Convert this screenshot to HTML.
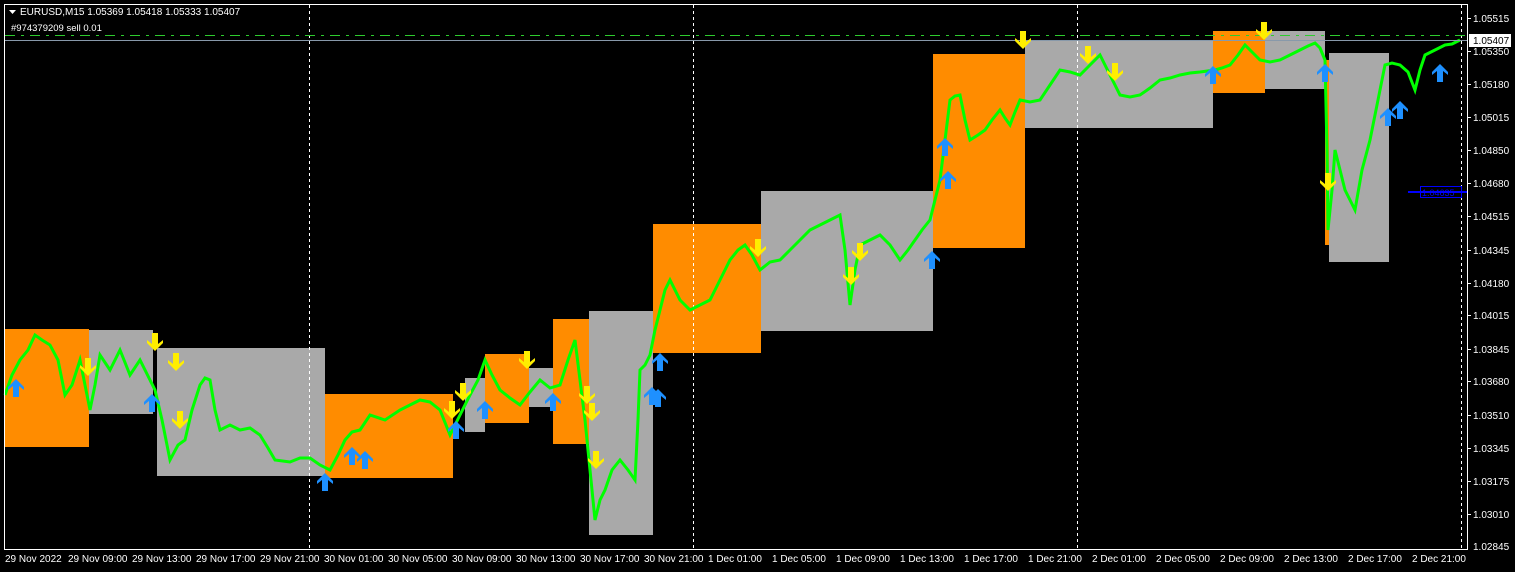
<!DOCTYPE html>
<html><head><meta charset="utf-8"><style>
body{margin:0;background:#000;width:1515px;height:572px;overflow:hidden;font-family:"Liberation Sans",sans-serif}
svg{display:block}
text{font-family:"Liberation Sans",sans-serif;font-size:10px;fill:#fff}
</style></head><body>
<svg width="1515" height="572" viewBox="0 0 1515 572">
<defs>
<g id="up"><path d="M0,-9 L8,-1 L8,2 L3,-2 L3,9 L-3,9 L-3,-2 L-8,2 L-8,-1 Z" fill="#1e90ff"/></g>
<g id="dn"><path d="M0,9 L8,1 L8,-2 L3,2 L3,-9 L-3,-9 L-3,2 L-8,-2 L-8,1 Z" fill="#ffee00"/></g>
</defs>
<rect x="0" y="0" width="1515" height="572" fill="#000"/>
<g>
<rect x="5" y="329" width="84" height="118" fill="#ff8c00"/>
<rect x="89" y="330" width="64" height="84" fill="#a9a9a9"/>
<rect x="157" y="348" width="168" height="128" fill="#a9a9a9"/>
<rect x="325" y="394" width="128" height="84" fill="#ff8c00"/>
<rect x="465" y="378" width="20" height="54" fill="#a9a9a9"/>
<rect x="485" y="354" width="44" height="69" fill="#ff8c00"/>
<rect x="529" y="368" width="24" height="39" fill="#a9a9a9"/>
<rect x="553" y="319" width="36" height="125" fill="#ff8c00"/>
<rect x="589" y="311" width="64" height="224" fill="#a9a9a9"/>
<rect x="653" y="224" width="108" height="129" fill="#ff8c00"/>
<rect x="761" y="191" width="172" height="140" fill="#a9a9a9"/>
<rect x="933" y="54" width="92" height="194" fill="#ff8c00"/>
<rect x="1025" y="41" width="188" height="87" fill="#a9a9a9"/>
<rect x="1213" y="31" width="52" height="62" fill="#ff8c00"/>
<rect x="1265" y="31" width="60" height="58" fill="#a9a9a9"/>
<rect x="1325" y="60" width="4" height="185" fill="#ff8c00"/>
<rect x="1329" y="53" width="60" height="209" fill="#a9a9a9"/>
</g>
<g stroke="#fff" stroke-dasharray="3,3" stroke-width="1">
<line x1="309.5" y1="5" x2="309.5" y2="548"/>
<line x1="693.5" y1="5" x2="693.5" y2="548"/>
<line x1="1077.5" y1="5" x2="1077.5" y2="548"/>
<line x1="1461.5" y1="5" x2="1461.5" y2="548"/>
</g>
<polyline fill="none" stroke="#00ff00" stroke-width="3" points="5,395 12,375 20,360 28,350 35,335 42,340 50,345 58,360 65,395 72,385 80,360 90,410 95,385 100,355 110,370 120,350 130,375 140,360 150,380 155,390 162,420 170,460 178,445 185,440 192,410 200,385 205,378 210,380 215,410 220,430 230,425 240,430 250,428 260,435 268,448 275,460 290,462 300,458 310,458 320,465 330,470 338,455 345,440 352,432 360,430 370,415 385,420 400,410 410,405 420,400 430,402 440,410 450,435 460,415 470,395 478,380 485,360 492,375 500,390 510,398 520,405 530,392 540,380 550,388 560,385 568,360 575,340 580,380 585,420 590,470 595,520 600,500 605,490 612,470 620,460 628,470 635,480 638,420 640,370 645,365 650,355 655,330 660,310 665,290 670,280 680,300 690,310 700,305 710,300 720,280 730,260 738,250 745,245 752,255 760,270 770,262 780,260 790,250 800,240 810,230 820,225 830,220 840,215 845,250 850,305 855,270 860,245 870,240 880,235 890,245 900,260 908,250 915,240 922,230 930,220 935,200 940,180 945,140 950,100 955,96 960,95 965,120 970,140 978,135 985,130 992,120 1000,110 1005,118 1010,125 1015,112 1020,100 1030,102 1040,100 1050,85 1060,70 1070,72 1080,75 1090,65 1100,55 1110,75 1120,95 1130,97 1140,95 1150,88 1160,80 1170,78 1180,75 1190,73 1200,72 1215,70 1222,68 1230,65 1238,55 1245,45 1252,52 1260,60 1270,62 1280,60 1290,55 1300,50 1308,46 1315,43 1320,48 1325,60 1327,150 1328,230 1332,190 1335,150 1340,170 1345,190 1350,200 1355,210 1362,170 1370,140 1378,100 1385,65 1392,63 1400,65 1408,72 1415,90 1420,70 1425,55 1435,50 1445,45 1452,44 1460,40"/>
<line x1="5" y1="35.5" x2="1467" y2="35.5" stroke="#2ecc2e" stroke-width="1" stroke-dasharray="10,6,3,6"/>
<line x1="5" y1="40.5" x2="1467" y2="40.5" stroke="#8899aa" stroke-width="1"/>
<line x1="1408" y1="192" x2="1467" y2="192" stroke="#0000ff" stroke-width="2"/>
<rect x="1420.5" y="186.5" width="41" height="11" fill="none" stroke="#0000ff"/>
<text x="1422" y="196" style="fill:#0000ff;font-size:9px">1.04635</text>
<use href="#up" x="16" y="388"/><use href="#up" x="152" y="403"/><use href="#up" x="325" y="482"/>
<use href="#up" x="352" y="456"/><use href="#up" x="365" y="460"/><use href="#up" x="456" y="430"/>
<use href="#up" x="485" y="410"/><use href="#up" x="553" y="402"/><use href="#up" x="652" y="396"/>
<use href="#up" x="658" y="398"/><use href="#up" x="660" y="362"/><use href="#up" x="945" y="147"/>
<use href="#up" x="948" y="180"/><use href="#up" x="932" y="260"/><use href="#up" x="1213" y="75"/>
<use href="#up" x="1325" y="73"/><use href="#up" x="1388" y="117"/><use href="#up" x="1400" y="110"/>
<use href="#up" x="1440" y="73"/>
<use href="#dn" x="88" y="367"/><use href="#dn" x="155" y="342"/><use href="#dn" x="176" y="362"/>
<use href="#dn" x="180" y="420"/><use href="#dn" x="452" y="410"/><use href="#dn" x="463" y="392"/>
<use href="#dn" x="527" y="360"/><use href="#dn" x="587" y="395"/><use href="#dn" x="592" y="412"/>
<use href="#dn" x="596" y="460"/><use href="#dn" x="758" y="248"/><use href="#dn" x="851" y="276"/>
<use href="#dn" x="860" y="252"/><use href="#dn" x="1023" y="40"/><use href="#dn" x="1088" y="55"/>
<use href="#dn" x="1115" y="72"/><use href="#dn" x="1264" y="31"/><use href="#dn" x="1328" y="182"/>
<rect x="4.5" y="4.5" width="1463" height="545" fill="none" stroke="#fff"/>
<path d="M9,10 L16,10 L12.5,14 Z" fill="#fff"/>
<text x="20" y="15" style="font-size:10px">EURUSD,M15  1.05369 1.05418 1.05333 1.05407</text>
<text x="11" y="31" style="font-size:9.5px">#974379209 sell 0.01</text>
<g>
<text x="1473" y="22">1.05515</text>
<text x="1473" y="55">1.05350</text>
<text x="1473" y="88">1.05180</text>
<text x="1473" y="121">1.05015</text>
<text x="1473" y="154">1.04850</text>
<text x="1473" y="187">1.04680</text>
<text x="1473" y="220">1.04515</text>
<text x="1473" y="254">1.04345</text>
<text x="1473" y="287">1.04180</text>
<text x="1473" y="319">1.04015</text>
<text x="1473" y="353">1.03845</text>
<text x="1473" y="385">1.03680</text>
<text x="1473" y="419">1.03510</text>
<text x="1473" y="452">1.03345</text>
<text x="1473" y="485">1.03175</text>
<text x="1473" y="518">1.03010</text>
<text x="1473" y="550">1.02845</text>
<rect x="1469" y="34" width="42" height="13" fill="#fff"/>
<text x="1473" y="44" style="fill:#000">1.05407</text>
</g>
<g stroke="#fff">
<line x1="1467" y1="18.5" x2="1471" y2="18.5"/><line x1="1467" y1="51.5" x2="1471" y2="51.5"/>
<line x1="1467" y1="84.5" x2="1471" y2="84.5"/><line x1="1467" y1="117.5" x2="1471" y2="117.5"/>
<line x1="1467" y1="150.5" x2="1471" y2="150.5"/><line x1="1467" y1="183.5" x2="1471" y2="183.5"/>
<line x1="1467" y1="216.5" x2="1471" y2="216.5"/><line x1="1467" y1="250.5" x2="1471" y2="250.5"/>
<line x1="1467" y1="283.5" x2="1471" y2="283.5"/><line x1="1467" y1="315.5" x2="1471" y2="315.5"/>
<line x1="1467" y1="349.5" x2="1471" y2="349.5"/><line x1="1467" y1="381.5" x2="1471" y2="381.5"/>
<line x1="1467" y1="415.5" x2="1471" y2="415.5"/><line x1="1467" y1="448.5" x2="1471" y2="448.5"/>
<line x1="1467" y1="481.5" x2="1471" y2="481.5"/><line x1="1467" y1="514.5" x2="1471" y2="514.5"/>
</g>
<g style="font-size:9.5px">
<text x="5" y="562">29 Nov 2022</text><text x="68" y="562">29 Nov 09:00</text><text x="132" y="562">29 Nov 13:00</text>
<text x="196" y="562">29 Nov 17:00</text><text x="260" y="562">29 Nov 21:00</text><text x="324" y="562">30 Nov 01:00</text>
<text x="388" y="562">30 Nov 05:00</text><text x="452" y="562">30 Nov 09:00</text><text x="516" y="562">30 Nov 13:00</text>
<text x="580" y="562">30 Nov 17:00</text><text x="644" y="562">30 Nov 21:00</text><text x="708" y="562">1 Dec 01:00</text>
<text x="772" y="562">1 Dec 05:00</text><text x="836" y="562">1 Dec 09:00</text><text x="900" y="562">1 Dec 13:00</text>
<text x="964" y="562">1 Dec 17:00</text><text x="1028" y="562">1 Dec 21:00</text><text x="1092" y="562">2 Dec 01:00</text>
<text x="1156" y="562">2 Dec 05:00</text><text x="1220" y="562">2 Dec 09:00</text><text x="1284" y="562">2 Dec 13:00</text>
<text x="1348" y="562">2 Dec 17:00</text><text x="1412" y="562">2 Dec 21:00</text>
</g>
</svg>
</body></html>
